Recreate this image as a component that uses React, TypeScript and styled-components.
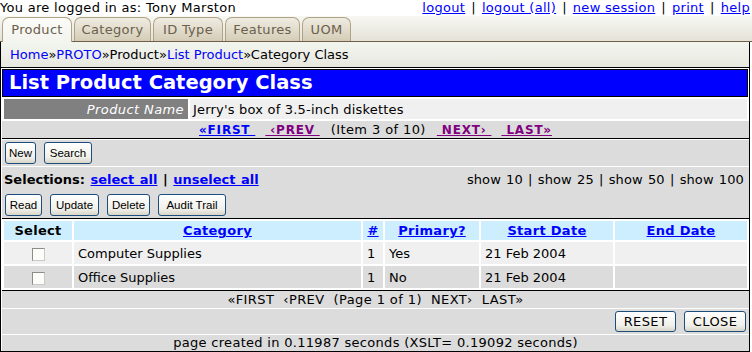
import React from 'react';
import styled, { createGlobalStyle } from 'styled-components';

const GlobalStyle = createGlobalStyle`
  html, body {
    margin: 0;
    padding: 0;
    background: #fff;
  }
  body {
    font-family: "DejaVu Sans", Verdana, sans-serif;
    font-size: 13px;
    color: #000;
  }
  a {
    color: #0000ff;
  }
`;

const TopBar = styled.div`
  display: flex;
  justify-content: space-between;
  width: 752px;
  height: 16px;
  line-height: 15px;
  padding-right: 2px;
  box-sizing: border-box;
  letter-spacing: 0.3px;
`;

const Sep = styled.span`
  margin: 0 6px;
`;

const TabStrip = styled.div`
  display: flex;
  align-items: flex-end;
  gap: 2px;
  width: 752px;
  height: 26px;
  padding-left: 2px;
  box-sizing: border-box;
  background: linear-gradient(#f7f7f3, #e5e3d8);
  border-bottom: 1px solid #6f5f47;
`;

const Tab = styled.div<{ $active?: boolean; $w: number }>`
  width: ${p => p.$w}px;
  height: ${p => (p.$active ? '25px' : '24px')};
  line-height: 24px;
  text-align: center;
  box-sizing: border-box;
  margin-bottom: ${p => (p.$active ? '-1px' : '0')};
  border: 1px solid #aea385;
  border-bottom: none;
  border-radius: 7px 7px 0 0;
  color: #6b5f4d;
  letter-spacing: 0.3px;
  background: ${p =>
    p.$active
      ? 'linear-gradient(#fbfbf8, #f3f4ee)'
      : 'linear-gradient(#f0ece2, #d4ccb6)'};
`;

const Frame = styled.div`
  width: 750px;
  border: 1px solid #000;
  border-top: none;
  box-sizing: border-box;
`;

const Crumbs = styled.div`
  height: 25px;
  line-height: 25px;
  padding-left: 9px;
  border-bottom: 1px solid #000;
  background: linear-gradient(#f3f5ef, #e6e8e0);
  a {
    text-decoration: none;
  }
`;

const Body = styled.div`
  padding: 1px 0 0 1px;
`;

const Heading = styled.h1`
  margin: 0 1px 0 0;
  height: 26px;
  border: 1px solid #000;
  background: #0000ff;
  color: #fff;
  font-size: 19.5px;
  font-weight: bold;
  line-height: 26px;
  padding-left: 6px;
`;

const FieldTable = styled.table`
  width: 100%;
  border-spacing: 2px;
  background: #fff;
`;

const Label = styled.td`
  width: 180px;
  height: 20px;
  padding: 0 4px 0 0;
  background: #808080;
  color: #fff;
  font-style: italic;
  text-align: right;
  letter-spacing: 0.4px;
`;

const Value = styled.td`
  padding: 0 0 0 3px;
  background: #f0f0f0;
  letter-spacing: 0.2px;
`;

const Pager = styled.div<{ $line?: boolean }>`
  height: 17px;
  line-height: 17px;
  text-align: center;
  background: #dcdcdc;
  white-space: pre;
  letter-spacing: 0.4px;
  border-bottom: ${p => (p.$line ? '1px solid #000' : 'none')};
`;

const PageLink = styled.a<{ $visited?: boolean }>`
  color: ${p => (p.$visited ? '#800080' : '#0000ff')};
  font-weight: bold;
  font-size: 12px;
  letter-spacing: 0.8px;
  margin: 0 5px;
`;

const ItemCount = styled.span`
  margin: 0 6px;
`;

const ButtonBar = styled.div<{ $right?: boolean; $h?: number }>`
  display: flex;
  align-items: center;
  justify-content: ${p => (p.$right ? 'flex-end' : 'flex-start')};
  gap: 8px;
  height: ${p => p.$h ?? 26}px;
  padding: 0 3px 0 3px;
  background: #dcdcdc;
  border-top: 1px solid #fff;
`;

const Button = styled.button<{ $w: number; $big?: boolean }>`
  width: ${p => p.$w}px;
  height: ${p => (p.$big ? 21 : 22)}px;
  padding: 0;
  border: 1px solid #1d4d7c;
  border-radius: 3px;
  background: linear-gradient(#ffffff, #f1f0ea 70%, #d9d5c8);
  font-family: ${p => (p.$big ? '"DejaVu Sans", Verdana, sans-serif' : '"Liberation Sans", Arial, sans-serif')};
  font-size: ${p => (p.$big ? 13 : 11.5)}px;
  letter-spacing: ${p => (p.$big ? 0.4 : 0)}px;
  color: #000;
`;

const SelectionBlock = styled.div`
  background: #dcdcdc;
  border-top: 1px solid #fff;
  border-bottom: 1px solid #000;
`;

const SelRow = styled.div`
  display: flex;
  justify-content: space-between;
  align-items: center;
  height: 24px;
  padding: 0 5px 0 2px;
`;

const Bold = styled.span`
  font-weight: bold;
  word-spacing: 1px;
`;

const ShowLinks = styled.span`
  word-spacing: 1px;
  letter-spacing: 0.1px;
`;

const ActionBar = styled(ButtonBar)`
  border-top: none;
  height: 27px;
  align-items: flex-start;
  padding-top: 3px;
  box-sizing: border-box;
`;

const Grid = styled.table`
  width: 100%;
  border-spacing: 2px;
  background: #fff;
  border-bottom: 1px solid #000;
`;

const Th = styled.th<{ $w?: number }>`
  width: ${p => (p.$w ? `${p.$w}px` : 'auto')};
  height: 19px;
  padding: 0;
  background: #cceeff;
  font-weight: bold;
  text-align: center;
  letter-spacing: 0.3px;
  a {
    color: #0000ff;
  }
`;

const Td = styled.td<{ $odd: boolean; $center?: boolean }>`
  height: 22px;
  padding: 0 0 0 4px;
  background: ${p => (p.$odd ? '#f0f0f0' : '#dcdcdc')};
  text-align: ${p => (p.$center ? 'center' : 'left')};
`;

const Check = styled.span`
  display: inline-block;
  width: 11px;
  height: 11px;
  margin: 3px 0 0 -4px;
  border: 1px solid #8c8c8c;
  border-right-color: #c8c8c8;
  border-bottom-color: #c8c8c8;
  background: #fcfcf8;
  vertical-align: top;
`;

const Footer = styled.div`
  height: 16px;
  line-height: 16px;
  text-align: center;
  background: #dcdcdc;
  border-top: 1px solid #fff;
  letter-spacing: 0.3px;
`;

const rows = [
  { category: 'Computer Supplies', seq: '1', primary: 'Yes', start: '21 Feb 2004', end: '' },
  { category: 'Office Supplies', seq: '1', primary: 'No', start: '21 Feb 2004', end: '' },
];

const tabs = [
  { name: 'Product', w: 70 },
  { name: 'Category', w: 77 },
  { name: 'ID Type', w: 70 },
  { name: 'Features', w: 75 },
  { name: 'UOM', w: 49 },
];

export default function App() {
  return (
    <>
      <GlobalStyle />
      <TopBar>
        <span>You are logged in as: Tony Marston</span>
        <span>
          <a href="#">logout</a>
          <Sep>|</Sep>
          <a href="#">logout (all)</a>
          <Sep>|</Sep>
          <a href="#">new session</a>
          <Sep>|</Sep>
          <a href="#">print</a>
          <Sep>|</Sep>
          <a href="#">help</a>
        </span>
      </TopBar>
      <TabStrip>
        {tabs.map((t, i) => (
          <Tab key={t.name} $w={t.w} $active={i === 0}>{t.name}</Tab>
        ))}
      </TabStrip>
      <Frame>
        <Crumbs>
          <a href="#">Home</a>»<a href="#">PROTO</a>»Product»<a href="#">List Product</a>»Category Class
        </Crumbs>
        <Body>
          <Heading>List Product Category Class</Heading>
          <FieldTable>
            <tbody>
              <tr>
                <Label>Product Name</Label>
                <Value>Jerry's box of 3.5-inch diskettes</Value>
              </tr>
            </tbody>
          </FieldTable>
          <Pager $line>
            <PageLink href="#">«FIRST </PageLink>
            <PageLink href="#" $visited> ‹PREV </PageLink>
            <ItemCount>(Item 3 of 10)</ItemCount>
            <PageLink href="#" $visited> NEXT› </PageLink>
            <PageLink href="#" $visited> LAST»</PageLink>
          </Pager>
          <ButtonBar>
            <Button $w={31}>New</Button>
            <Button $w={48}>Search</Button>
          </ButtonBar>
          <SelectionBlock>
            <SelRow>
              <Bold>
                Selections: <a href="#">select all</a> | <a href="#">unselect all</a>
              </Bold>
              <ShowLinks>show 10 | show 25 | show 50 | show 100</ShowLinks>
            </SelRow>
            <ActionBar>
              <Button $w={37}>Read</Button>
              <Button $w={49}>Update</Button>
              <Button $w={43}>Delete</Button>
              <Button $w={68}>Audit Trail</Button>
            </ActionBar>
          </SelectionBlock>
          <Grid>
            <thead>
              <tr>
                <Th $w={68}>Select</Th>
                <Th $w={287}><a href="#">Category</a></Th>
                <Th $w={20}><a href="#">#</a></Th>
                <Th $w={94}><a href="#">Primary?</a></Th>
                <Th $w={132}><a href="#">Start Date</a></Th>
                <Th><a href="#">End Date</a></Th>
              </tr>
            </thead>
            <tbody>
              {rows.map((r, i) => (
                <tr key={r.category}>
                  <Td $odd={i % 2 === 0} $center><Check /></Td>
                  <Td $odd={i % 2 === 0}>{r.category}</Td>
                  <Td $odd={i % 2 === 0}>{r.seq}</Td>
                  <Td $odd={i % 2 === 0}>{r.primary}</Td>
                  <Td $odd={i % 2 === 0}>{r.start}</Td>
                  <Td $odd={i % 2 === 0}>{r.end}</Td>
                </tr>
              ))}
            </tbody>
          </Grid>
          <Pager>{'«FIRST  ‹PREV  (Page 1 of 1)  NEXT›  LAST»'}</Pager>
          <ButtonBar $right $h={25}>
            <Button $w={61} $big>RESET</Button>
            <Button $w={62} $big>CLOSE</Button>
          </ButtonBar>
          <Footer>page created in 0.11987 seconds (XSLT= 0.19092 seconds)</Footer>
        </Body>
      </Frame>
    </>
  );
}
